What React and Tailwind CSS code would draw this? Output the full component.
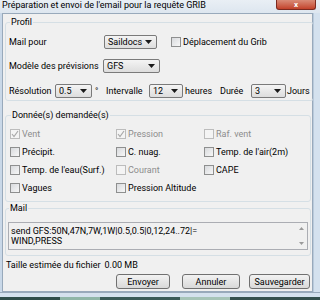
import React from 'react';

const font = "font-['Roboto','Liberation_Sans',sans-serif]";

function Arrow() {
  return (
    <svg width="7" height="4" viewBox="0 0 7 4" className="shrink-0">
      <polygon points="0,0 7,0 3.5,4" fill="#1a1a1a" />
    </svg>
  );
}

function Combo({ value, width }) {
  return (
    <div
      className="flex h-[14px] shrink-0 items-center justify-between rounded-[2px] border border-[#7a7a7a] bg-gradient-to-b from-[#f4f4f4] to-[#dddddd] pl-[3px] pr-[4px] text-[9px] leading-[12px] whitespace-nowrap text-black"
      style={{ width }}
    >
      <span>{value}</span>
      <Arrow />
    </div>
  );
}

function Check({ checked, disabled, label }) {
  return (
    <div className="flex h-[12px] items-center gap-[2px] whitespace-nowrap">
      <div
        className={`flex h-[10px] w-[10px] shrink-0 items-center justify-center border ${
          disabled ? 'border-[#bcbcbc] bg-[#f4f4f4]' : 'border-[#8e8f8f] bg-gradient-to-br from-[#d8dadd] to-[#f7f7f7]'
        }`}
      >
        {checked && (
          <svg width="8" height="8" viewBox="0 0 8 8">
            <polyline points="1,4 3,6.5 7,1" fill="none" stroke="#a9a9a9" strokeWidth="1.2" />
          </svg>
        )}
      </div>
      <span className={`text-[9px] leading-[12px] ${disabled ? 'text-[#8c8c8c]' : 'text-black'}`}>{label}</span>
    </div>
  );
}

function Group({ title, className, children }) {
  return (
    <fieldset className={`rounded-[3px] border border-[#d5dfe5] ${className}`}>
      <legend className="ml-[1px] px-[1px] text-[9px] leading-[12px] text-black">{title}</legend>
      {children}
    </fieldset>
  );
}

function Button({ label, width }) {
  return (
    <div
      className="flex h-[15px] items-center justify-center rounded-[3px] border border-[#707070] bg-gradient-to-b from-[#f2f2f2] to-[#d9d9d9] text-[9px] leading-[12px] text-black"
      style={{ width }}
    >
      {label}
    </div>
  );
}

export default function App() {
  return (
    <div className={`flex h-[300px] w-[320px] flex-col overflow-hidden bg-[#dbe6f1] ${font}`}>
      <div className="flex h-[13px] shrink-0 items-start bg-gradient-to-b from-[#e9eff5] to-[#dde6ef]">
        <span className="ml-[2px] text-[9px] leading-[11px] whitespace-nowrap text-black">Préparation et envoi de l'email pour la requête GRIB</span>
        <div className="ml-auto mr-[4px] flex h-[10px] w-[40px] items-center justify-center rounded-b-[3px] border border-t-0 border-[#7c2a1f] bg-gradient-to-b from-[#d98b77] to-[#c2412a] text-[8px] leading-[9px] font-bold text-white">
          x
        </div>
      </div>

      <div className="flex h-[279px] shrink-0">
        <div className="w-[2px] bg-[#c9d8e8]" />
        <div className="flex w-[311px] flex-col border border-[#98a9bb] bg-[#f0f0f0] pl-[2px]">
          <Group title="Profil" className="mt-[2px] w-[306px] px-[3px] pb-[2px]">
            <div className="mt-[7px] flex h-[14px] items-center whitespace-nowrap">
              <span className="w-[95px] text-[9px] leading-[12px]">Mail pour</span>
              <Combo value="Saildocs" width="53px" />
              <div className="ml-[14px]">
                <Check label="Déplacement du Grib" />
              </div>
            </div>
            <div className="mt-[10px] flex h-[14px] items-center whitespace-nowrap">
              <span className="w-[94px] text-[9px] leading-[12px]">Modèle des prévisions</span>
              <Combo value="GFS" width="57px" />
            </div>
            <div className="mt-[10px] flex h-[15px] items-center whitespace-nowrap text-[9px] leading-[12px]">
              <span className="w-[46px]">Résolution</span>
              <Combo value="0.5" width="37px" />
              <span className="ml-[3px] w-[11px]">°</span>
              <span className="w-[43px]">Intervalle</span>
              <Combo value="12" width="34px" />
              <span className="ml-[2px] w-[35px]">heures</span>
              <span className="w-[31px]">Durée</span>
              <Combo value="3" width="35px" />
              <span className="ml-[1px]">Jours</span>
            </div>
          </Group>

          <Group title="Donnée(s) demandée(s)" className="mt-[8px] w-[306px] px-[4px] pb-[7px]">
            <div className="mt-[7px] grid grid-cols-[106px_88px_1fr] gap-y-[6px]">
              <Check checked disabled label="Vent" />
              <Check checked disabled label="Pression" />
              <Check disabled label="Raf. vent" />
              <Check label="Précipit." />
              <Check label="C. nuag." />
              <Check label="Temp. de l'air(2m)" />
              <Check label="Temp. de l'eau(Surf.)" />
              <Check disabled label="Courant" />
              <Check label="CAPE" />
              <Check label="Vagues" />
              <Check label="Pression Altitude" />
            </div>
          </Group>

          <Group title="Mail" className="w-[306px] px-[2px] pb-[5px]">
            <div className="mt-[8px] flex h-[28px] border border-[#abadb3] bg-[#f0f0f0]">
              <div className="flex-1 pl-[2px] pt-[3px] text-[9px] leading-[10px] whitespace-nowrap text-black">
                <div>send GFS:50N,47N,7W,1W|0.5,0.5|0,12,24..72|=</div>
                <div>WIND,PRESS</div>
              </div>
              <div className="flex w-[11px] flex-col items-center justify-between py-[4px]">
                <svg width="5" height="3" viewBox="0 0 5 3"><polygon points="0,3 5,3 2.5,0" fill="#9a9a9a" /></svg>
                <svg width="5" height="3" viewBox="0 0 5 3"><polygon points="0,0 5,0 2.5,3" fill="#9a9a9a" /></svg>
              </div>
            </div>
          </Group>

          <div className="mt-[3px] flex h-[12px] items-center pl-[1px] text-[9px] leading-[12px] whitespace-nowrap text-black">
            <span>Taille estimée du fichier</span>
            <span className="ml-[4px]">0.00 MB</span>
          </div>

          <div className="mt-[3px] flex">
            <div className="ml-[111px]"><Button label="Envoyer" width="54px" /></div>
            <div className="ml-[12px]"><Button label="Annuler" width="58px" /></div>
            <div className="ml-[9px]"><Button label="Sauvegarder" width="61px" /></div>
          </div>
        </div>
        <div className="flex-1 border-l border-[#b9cadb] bg-[#d4e1ee]" />
      </div>

      <div className="h-[5px] shrink-0 border-t border-[#98a9bb] bg-[#d4e1ee]" />
      <div className="flex h-[3px] shrink-0">
        <div className="w-[60px] bg-[#2f4d4a]" />
        <div className="w-[40px] bg-[#8fb6a8]" />
        <div className="w-[80px] bg-[#3a5a58]" />
        <div className="w-[50px] bg-[#a6c4b8]" />
        <div className="flex-1 bg-[#34504e]" />
      </div>
    </div>
  );
}
